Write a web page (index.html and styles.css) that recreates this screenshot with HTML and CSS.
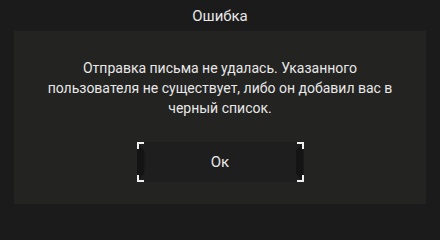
FILE: index.html
```html
<!DOCTYPE html>
<html lang="ru">
<head>
<meta charset="utf-8">
<link rel="stylesheet" href="styles.css">
</head>
<body>
<div class="dialog">
  <div class="title">Ошибка</div>
  <div class="panel">
    <p class="message">Отправка письма не удалась. Указанного<br>пользователя не существует, либо он добавил вас в<br>черный список.</p>
    <button class="btn">
      <span class="side side-left"></span>
      <span class="label">Ок</span>
      <span class="side side-right"></span>
      <span class="corner tl"></span><span class="corner tr"></span><span class="corner bl"></span><span class="corner br"></span>
    </button>
  </div>
</div>
</body>
</html>
```
FILE: styles.css
```css
html, body { margin: 0; padding: 0; }
body {
  background: #1b1b1b;
  width: 440px;
  height: 221px;
  overflow: hidden;
  font-family: Roboto, "Liberation Sans", sans-serif;
  color: #e8e8e8;
}
.dialog { display: flex; flex-direction: column; }
.title {
  height: 31px;
  line-height: 33px;
  text-align: center;
  font-size: 15px;
}
.panel {
  margin: 0 14px;
  height: 173px;
  background: #232322;
  display: flex;
  flex-direction: column;
  align-items: center;
  padding-top: 27px;
  box-sizing: border-box;
}
.message {
  margin: 0;
  width: 390px;
  text-align: center;
  font-size: 14px;
  line-height: 20px;
  white-space: nowrap;
}
.btn {
  position: relative;
  margin-top: 24px;
  width: 167px;
  height: 40px;
  border: 0;
  padding: 0;
  background: #1e1e1e;
  color: #e8e8e8;
  font-family: inherit;
  font-size: 15px;
  display: flex;
  align-items: center;
  justify-content: space-between;
}
.label { flex: 1; text-align: center; }
.side {
  width: 8px;
  height: 37px;
  background: #141414;
}
.side-left { clip-path: polygon(0 0, 15% 0, 100% 20%, 100% 80%, 15% 100%, 0 100%); }
.side-right { clip-path: polygon(100% 0, 85% 0, 0 20%, 0 80%, 85% 100%, 100% 100%); }
.corner {
  position: absolute;
  width: 5px;
  height: 5px;
  border: 0 solid #f0f0f0;
}
.tl { top: 0; left: 0; border-top-width: 2px; border-left-width: 2px; }
.tr { top: 0; right: 0; border-top-width: 2px; border-right-width: 2px; }
.bl { bottom: 0; left: 0; border-bottom-width: 2px; border-left-width: 2px; }
.br { bottom: 0; right: 0; border-bottom-width: 2px; border-right-width: 2px; }
```
